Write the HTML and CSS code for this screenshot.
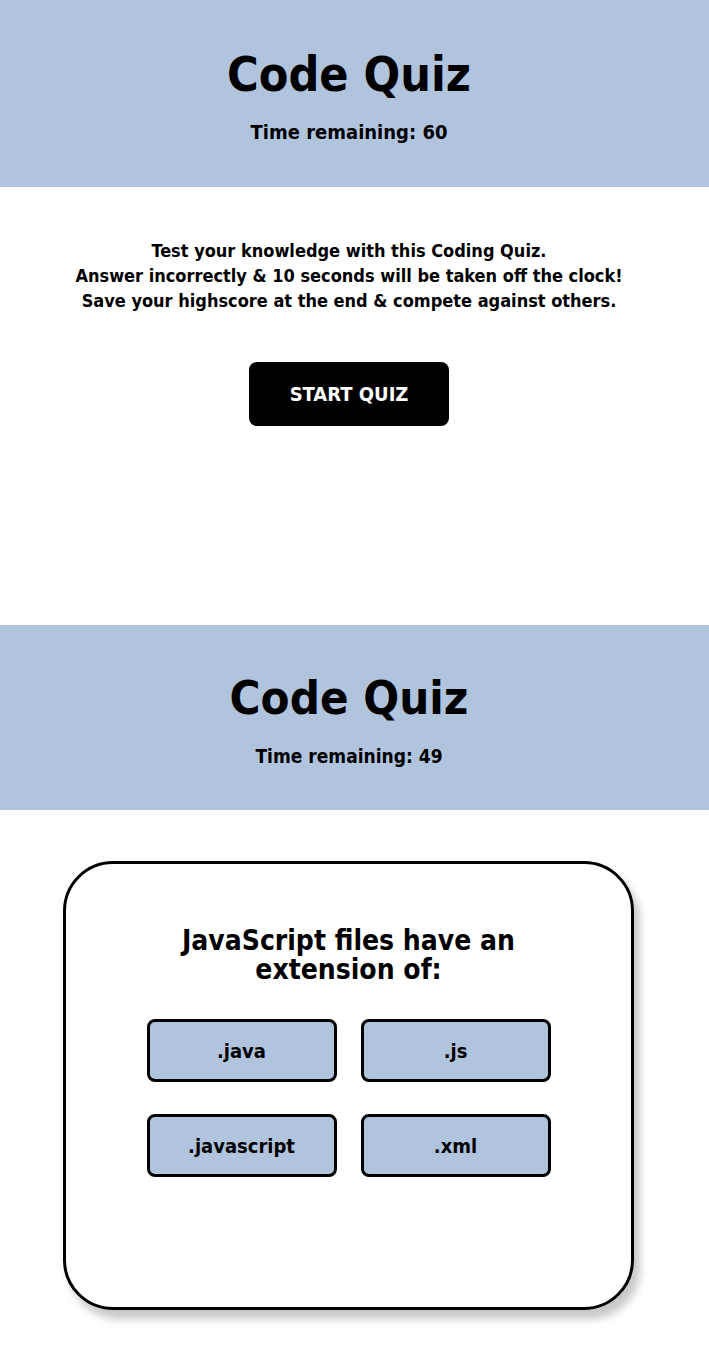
FILE: index.html
```html
<!DOCTYPE html>
<html lang="en">
<head>
<meta charset="utf-8">
<title>Code Quiz</title>
<link rel="stylesheet" href="styles.css">
</head>
<body>
<div class="screen screen-start">
  <header class="header">
    <h1 class="title">Code Quiz</h1>
    <p class="timer">Time remaining: 60</p>
  </header>
  <main class="intro">
    <p class="intro-text">Test your knowledge with this Coding Quiz.<br>Answer incorrectly &amp; 10 seconds will be taken off the clock!<br>Save your highscore at the end &amp; compete against others.</p>
    <button class="start-btn">START QUIZ</button>
  </main>
</div>
<div class="screen screen-question">
  <header class="header header-2">
    <h1 class="title title-2">Code Quiz</h1>
    <p class="timer timer-2">Time remaining: 49</p>
  </header>
  <main class="quiz">
    <section class="card">
      <h2 class="question">JavaScript files have an extension of:</h2>
      <div class="answers">
        <button class="answer">.java</button>
        <button class="answer">.js</button>
        <button class="answer">.javascript</button>
        <button class="answer">.xml</button>
      </div>
    </section>
  </main>
</div>
</body>
</html>
```

FILE: styles.css
```css
* { box-sizing: border-box; }
html, body { margin: 0; padding: 0; background: #fff; }
body {
  font-family: "DejaVu Sans Condensed", "DejaVu Sans", sans-serif;
  font-stretch: condensed;
  font-weight: bold;
  color: #000;
  text-align: center;
}
.screen-start { height: 625px; }
.header {
  background: #b0c4de;
  height: 187px;
  padding: 46px 11px 0 0;
}
.header-2 { height: 185px; padding-top: 45px; }
.title {
  margin: 0;
  font-size: 48px;
  line-height: 56px;
  font-weight: bold;
}
.title-2 { font-size: 47px; }
.timer {
  margin: 18px 0 0;
  font-size: 20px;
  line-height: 24px;
}
.timer-2 { font-size: 19px; margin-top: 18px; }
.intro { padding: 51px 11px 0 0; }
.intro-text {
  margin: 0;
  font-size: 18px;
  line-height: 25px;
}
.start-btn {
  margin-top: 49px;
  width: 200px;
  height: 64px;
  border: none;
  border-radius: 8px;
  background: #000;
  color: #fff;
  font-family: inherit;
  font-stretch: condensed;
  font-weight: bold;
  font-size: 20px;
  cursor: pointer;
}
.quiz {
  padding: 51px 0 42px 63px;
}
.card {
  width: 571px;
  height: 449px;
  border: 3px solid #000;
  border-radius: 50px;
  box-shadow: 6px 9px 9px rgba(0,0,0,0.22);
  padding-top: 62px;
}
.question {
  margin: 0 auto;
  width: 360px;
  font-size: 28px;
  line-height: 29px;
}
.answers {
  margin: 35px auto 0;
  width: 404px;
  display: grid;
  grid-template-columns: 190px 190px;
  grid-auto-rows: 63px;
  justify-content: space-between;
  row-gap: 32px;
}
.answer {
  height: 63px;
  border: 3px solid #000;
  border-radius: 8px;
  background: #b0c4de;
  font-family: inherit;
  font-stretch: condensed;
  font-weight: bold;
  font-size: 20px;
  color: #000;
  padding: 0;
  cursor: pointer;
}
```
